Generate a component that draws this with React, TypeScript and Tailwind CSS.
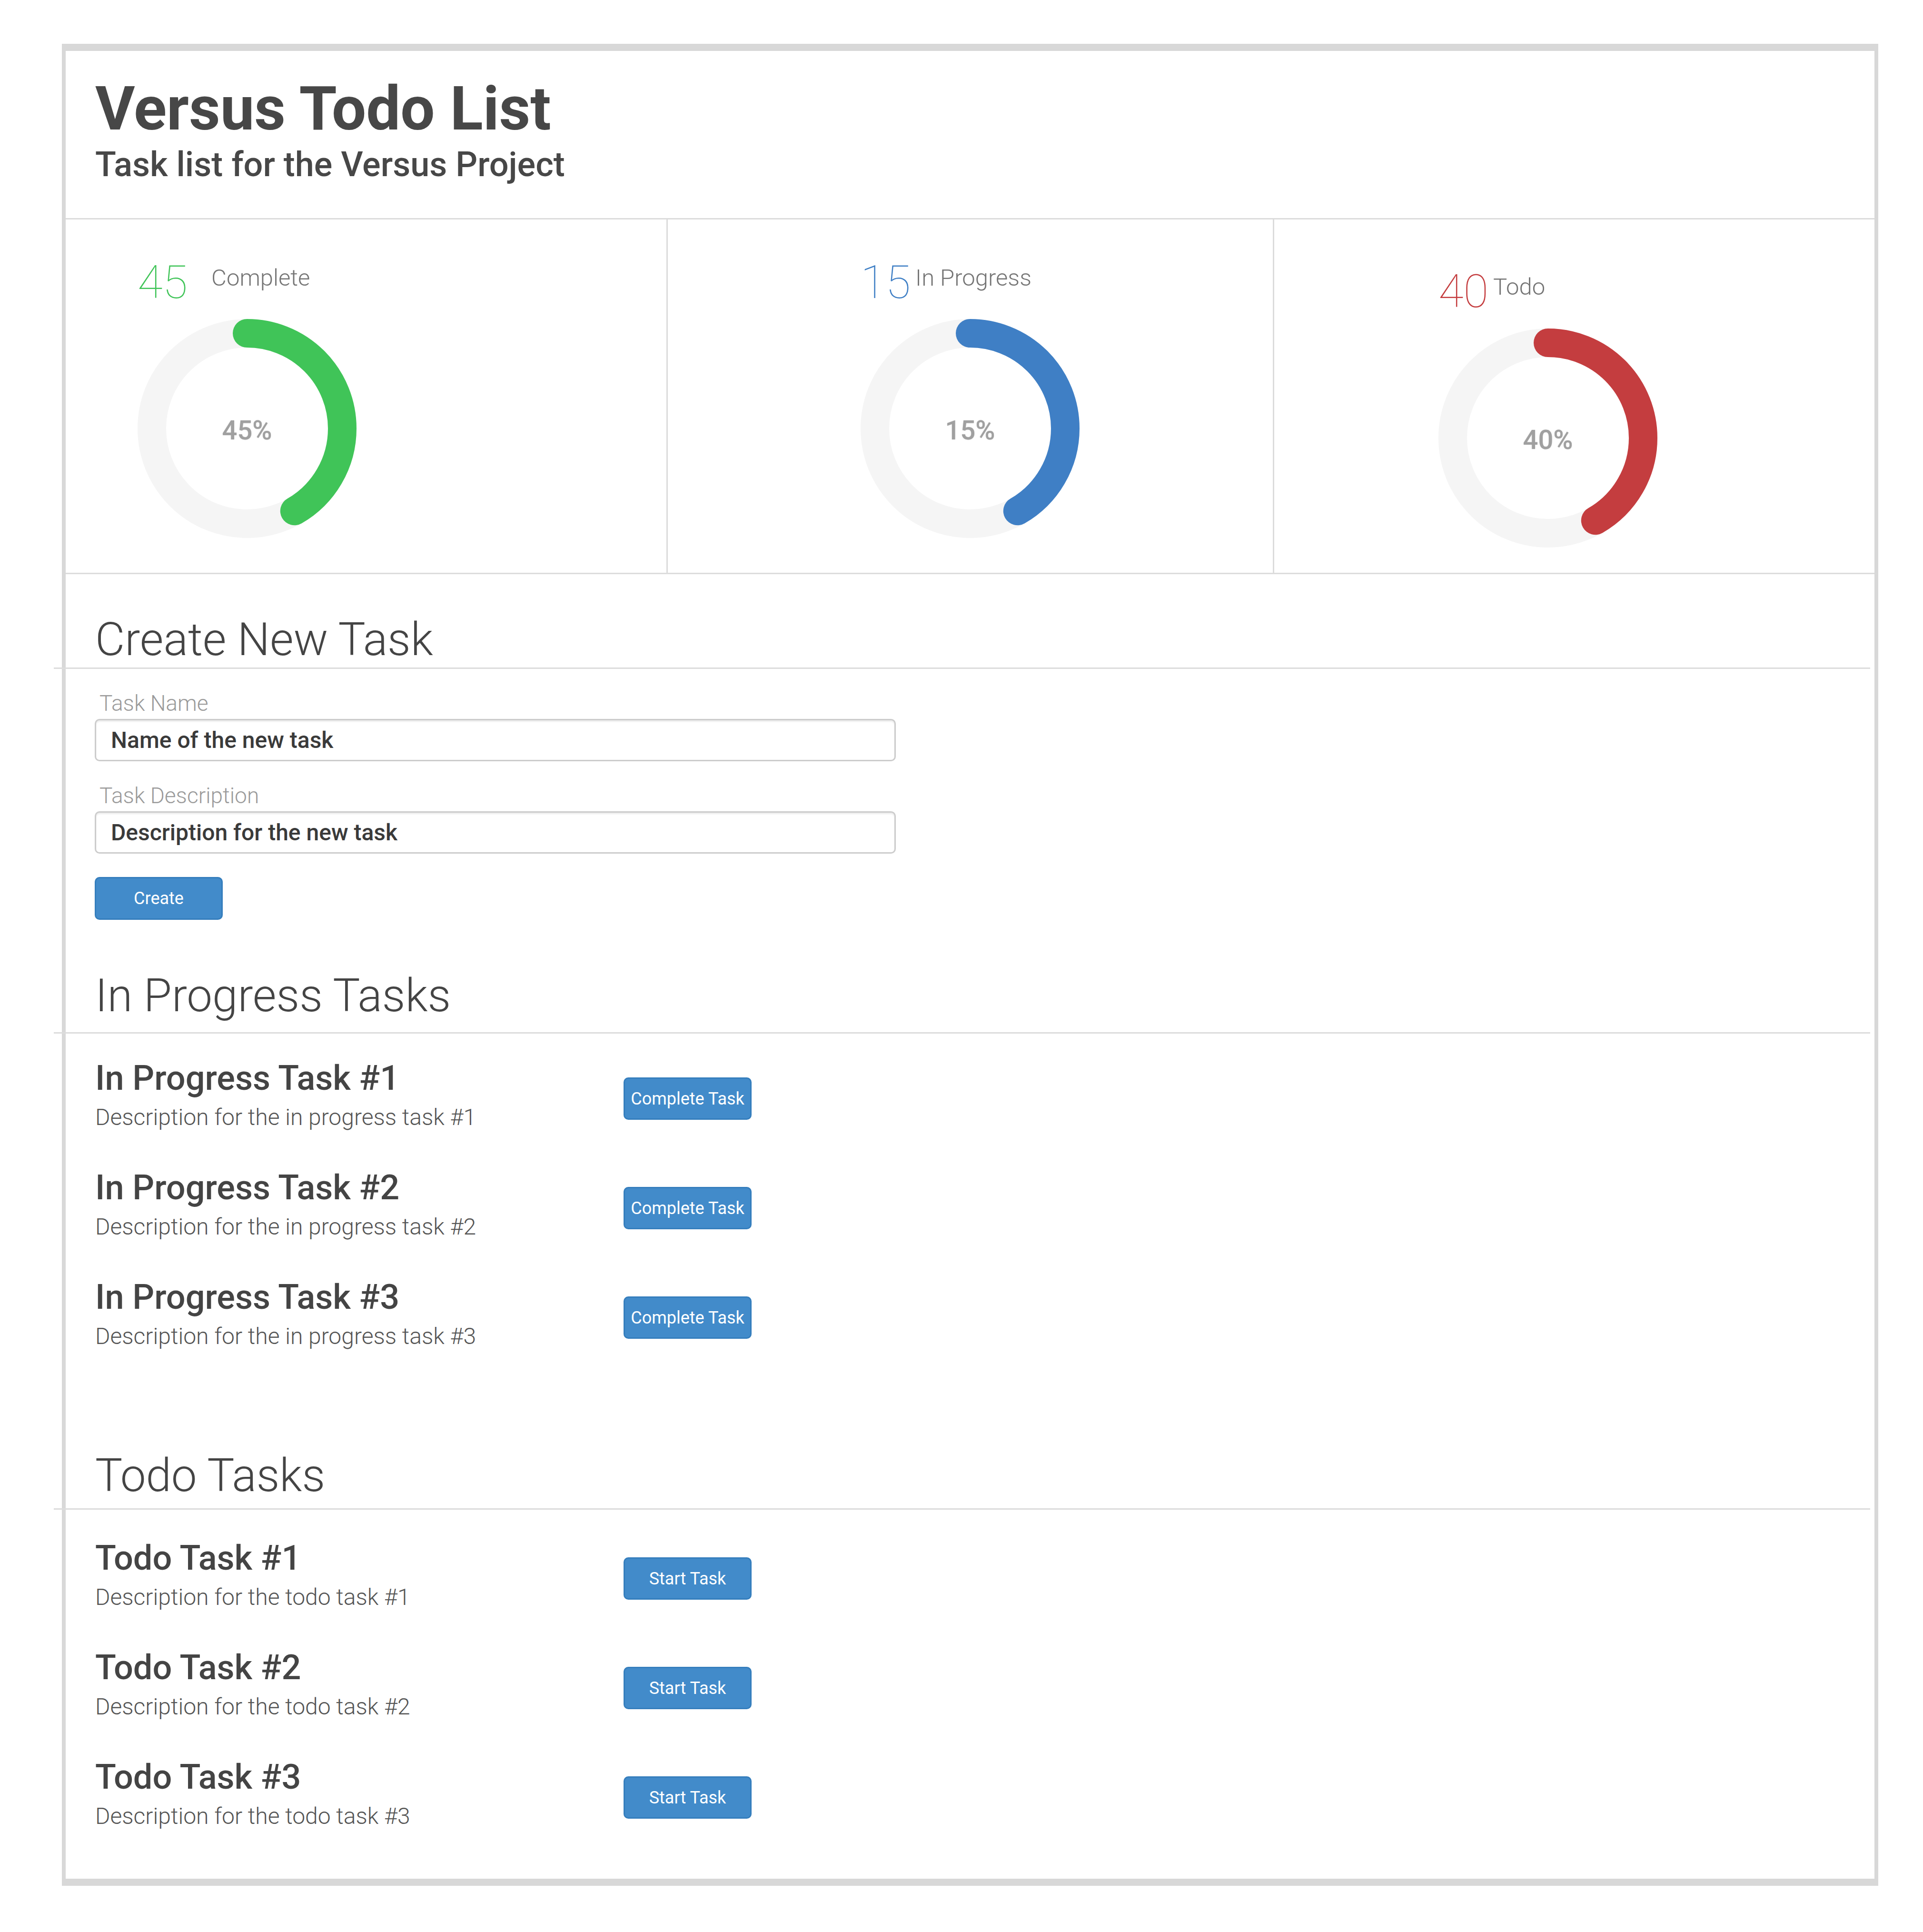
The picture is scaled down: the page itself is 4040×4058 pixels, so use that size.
import React from "react";

type Stat = {
  value: number;
  label: string;
  color: string;
  pad: string;
  gap: string;
  donutGap: string;
  width: string;
};

const stats: Stat[] = [
  { value: 45, label: "Complete", color: "#40c458", pad: "pt-[84px] pl-[151px]", gap: "ml-[50px]", donutGap: "mt-[29px]", width: "w-[1262px]" },
  { value: 15, label: "In Progress", color: "#3f7fc5", pad: "pt-[84px] pl-[405px] border-l-[3px]", gap: "ml-[10px]", donutGap: "mt-[29px]", width: "w-[1274px]" },
  { value: 40, label: "Todo", color: "#c43d3f", pad: "pt-[103px] pl-[345px] border-l-[3px]", gap: "ml-[10px]", donutGap: "mt-[30px]", width: "flex-1" },
];

const inProgress = [1, 2, 3].map((n) => ({
  title: `In Progress Task #${n}`,
  desc: `Description for the in progress task #${n}`,
}));

const todos = [1, 2, 3].map((n) => ({
  title: `Todo Task #${n}`,
  desc: `Description for the todo task #${n}`,
}));

function Donut({ value, color }: { value: number; color: string }) {
  const r = 200;
  const circ = 2 * Math.PI * r;
  // arc is drawn the same length on every card
  const arc = (circ * 150) / 360;
  return (
    <div className="relative w-[460px] h-[460px]">
      <svg width="460" height="460" viewBox="0 0 460 460" className="absolute inset-0">
        <circle cx="230" cy="230" r={r} fill="none" stroke="#f5f5f5" strokeWidth="60" />
        <circle
          cx="230"
          cy="230"
          r={r}
          fill="none"
          stroke={color}
          strokeWidth="60"
          strokeLinecap="round"
          strokeDasharray={`${arc} ${circ}`}
          transform="rotate(-90 230 230)"
        />
      </svg>
      <div className="absolute inset-0 flex items-center justify-center pt-[8px]">
        <span className="text-[56px] leading-none font-medium text-[#a0a0a0] [text-shadow:0_0_2px_rgba(0,0,0,0.2)]">
          {value}%
        </span>
      </div>
    </div>
  );
}

function SectionRule() {
  return <div className="ml-[-25px] mr-[9px] h-[3px] bg-[#dcdcdc]" />;
}

function TaskBtn({ children, className = "" }: { children: React.ReactNode; className?: string }) {
  return (
    <button className={`w-[269px] h-[89px] shrink-0 rounded-[10px] border-[3px] border-[#357ebd] bg-[#428bca] text-white text-[36px] leading-none font-normal ${className}`}>
      {children}
    </button>
  );
}

function TaskList({ items, action }: { items: { title: string; desc: string }[]; action: string }) {
  return (
    <div className="flex flex-col gap-[87px] pl-[62px]">
      {items.map((t) => (
        <div key={t.title} className="flex items-start">
          <div className="w-[1110px]">
            <div className="text-[72px] leading-[73px] font-medium text-[#444]">{t.title}</div>
            <div className="mt-[22px] text-[48px] leading-[48px] font-light text-[#555]">{t.desc}</div>
          </div>
          <TaskBtn className="mt-[35px]">{action}</TaskBtn>
        </div>
      ))}
    </div>
  );
}

export default function App() {
  return (
    <div className="bg-white pt-[92px] pl-[130px] pb-[96px] font-[family-name:Roboto,sans-serif]">
      <div className="w-[3816px] border-x-[8px] border-y-[15px] border-[#d8d8d8] bg-white">
        {/* Header */}
        <div className="pl-[62px] pt-[58px] pb-[76px]">
          <h1 className="text-[128px] leading-[127px] font-bold text-[#474747]">Versus Todo List</h1>
          <p className="mt-[17px] text-[72px] leading-[73px] font-medium text-[#474747]">
            Task list for the Versus Project
          </p>
        </div>

        {/* Stats */}
        <div className="flex h-[748px] border-y-[3px] border-[#dcdcdc]">
          {stats.map((s) => (
            <div key={s.label} className={`${s.width} ${s.pad} border-[#dcdcdc]`}>
              <div className="flex items-start">
                <span className="text-[96px] leading-[96px] font-thin" style={{ color: s.color }}>
                  {s.value}
                </span>
                <span className={`mt-[14px] ${s.gap} text-[49px] leading-[49px] font-light text-[#757575]`}>
                  {s.label}
                </span>
              </div>
              <div className={s.donutGap}>
                <Donut value={s.value} color={s.color} />
              </div>
            </div>
          ))}
        </div>

        {/* Create New Task */}
        <h2 className="mt-[89px] pl-[62px] text-[96px] leading-[96px] font-light text-[#444]">Create New Task</h2>
        <div className="mt-[11px]">
          <SectionRule />
        </div>
        <div className="pl-[62px]">
          <label className="mt-[49px] block pl-[9px] text-[46px] leading-[46px] font-light text-[#9a9a9a]">Task Name</label>
          <input
            readOnly
            defaultValue="Name of the new task"
            className="mt-[10px] ml-[-1px] block w-[1683px] h-[89px] rounded-[10px] border-[3px] border-[#cccccc] pl-[31px] text-[48px] font-medium text-[#3a3a3a] shadow-[inset_0_3px_3px_rgba(0,0,0,0.075)] outline-none"
          />
          <label className="mt-[49px] block pl-[9px] text-[46px] leading-[46px] font-light text-[#9a9a9a]">Task Description</label>
          <input
            readOnly
            defaultValue="Description for the new task"
            className="mt-[10px] ml-[-1px] block w-[1683px] h-[89px] rounded-[10px] border-[3px] border-[#cccccc] pl-[31px] text-[48px] font-medium text-[#3a3a3a] shadow-[inset_0_3px_3px_rgba(0,0,0,0.075)] outline-none"
          />
          <TaskBtn className="mt-[49px] ml-[-1px] block h-[90px]">Create</TaskBtn>
        </div>

        {/* In Progress */}
        <h2 className="mt-[111px] pl-[62px] text-[96px] leading-[96px] font-light text-[#444]">In Progress Tasks</h2>
        <div className="mt-[29px]">
          <SectionRule />
        </div>
        <div className="mt-[57px]">
          <TaskList items={inProgress} action="Complete Task" />
        </div>

        {/* Todo */}
        <h2 className="mt-[220px] pl-[62px] text-[96px] leading-[96px] font-light text-[#444]">Todo Tasks</h2>
        <div className="mt-[21px]">
          <SectionRule />
        </div>
        <div className="mt-[65px] pb-[107px]">
          <TaskList items={todos} action="Start Task" />
        </div>
      </div>
    </div>
  );
}
